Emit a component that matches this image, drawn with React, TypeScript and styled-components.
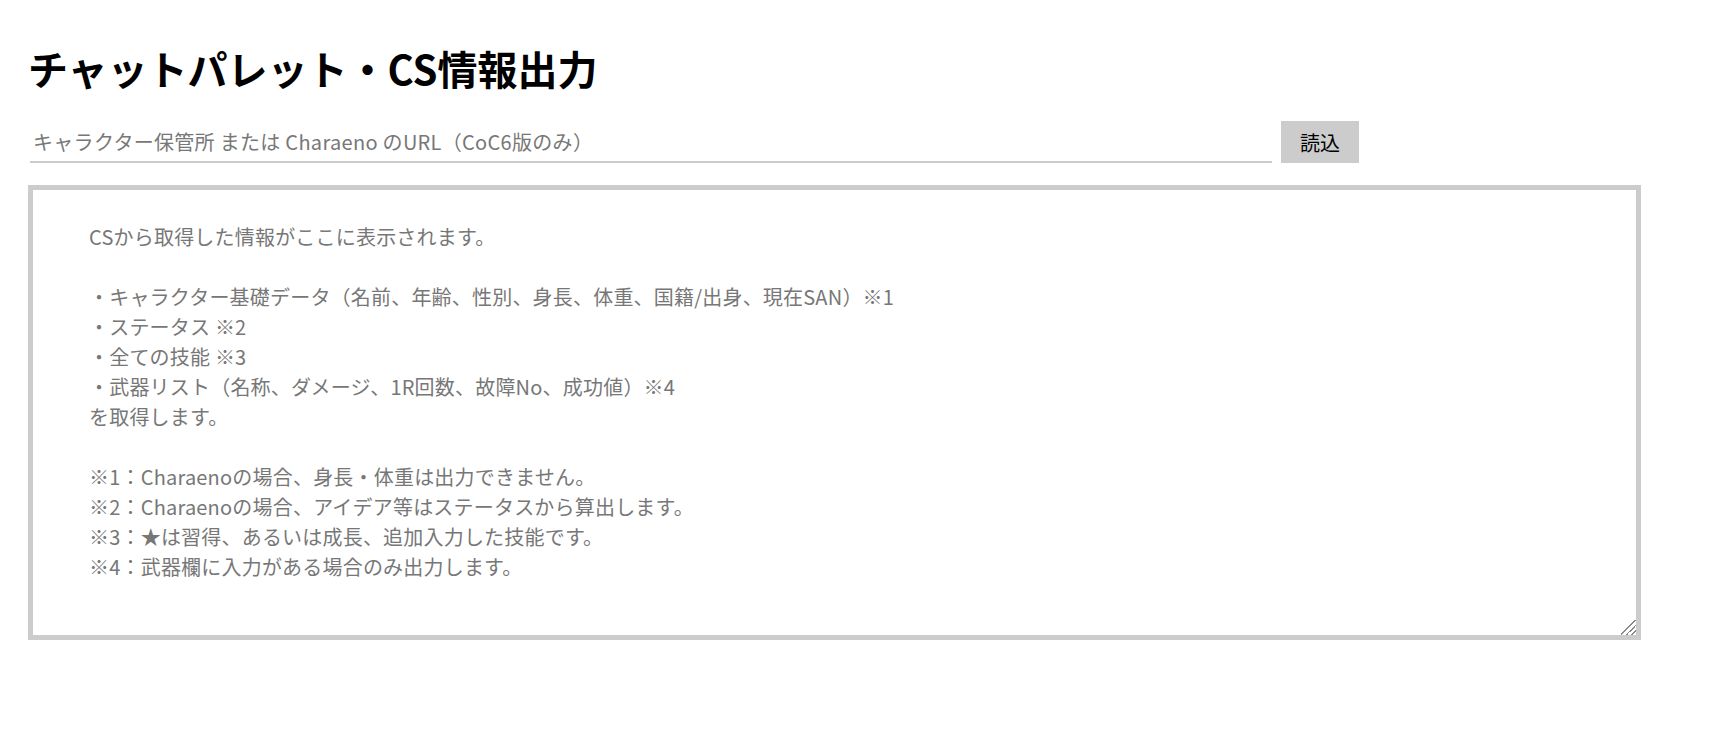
import React from 'react';
import styled, { createGlobalStyle } from 'styled-components';

const GlobalStyle = createGlobalStyle`
  body {
    margin: 0;
    background: #fff;
    font-family: "Noto Sans CJK JP", "Noto Sans", sans-serif;
    color: #000;
  }
`;

const PLACEHOLDER = [
  'CSから取得した情報がここに表示されます。',
  '',
  '・キャラクター基礎データ（名前、年齢、性別、身長、体重、国籍/出身、現在SAN）※1',
  '・ステータス ※2',
  '・全ての技能 ※3',
  '・武器リスト（名称、ダメージ、1R回数、故障No、成功値）※4',
  'を取得します。',
  '',
  '※1：Charaenoの場合、身長・体重は出力できません。',
  '※2：Charaenoの場合、アイデア等はステータスから算出します。',
  '※3：★は習得、あるいは成長、追加入力した技能です。',
  '※4：武器欄に入力がある場合のみ出力します。'
].join('\n');

// Styling
const Page = styled.main`
  padding: 0 28px;
`;

const Title = styled.h1`
  margin: 44px 0 0;
  font-size: 40px;
  line-height: 48px;
  font-weight: 700;
`;

const LoadRow = styled.div`
  display: flex;
  align-items: stretch;
  gap: 9px;
  margin-top: 29px;
  padding-left: 2px;
`;

const UrlInput = styled.input`
  box-sizing: border-box;
  width: 1242px;
  height: 42px;
  padding: 0 3px;
  border: none;
  border-bottom: 2px solid #ccc;
  font-family: inherit;
  font-size: 20px;
  letter-spacing: 0.3px;
  color: #333;
  outline: none;
  background: transparent;

  &::placeholder {
    color: #777;
  }
`;

const LoadButton = styled.button`
  width: 78px;
  height: 42px;
  padding: 0;
  border: none;
  background: #ccc;
  font-family: inherit;
  font-size: 20px;
  color: #000;
  cursor: pointer;
`;

const InfoArea = styled.textarea`
  display: block;
  box-sizing: border-box;
  width: 1613px;
  height: 455px;
  margin-top: 22px;
  padding: 32px 56px;
  border: 5px solid #ccc;
  font-family: inherit;
  font-size: 20px;
  line-height: 30px;
  letter-spacing: 0.2px;
  color: #333;
  outline: none;
  resize: both;

  &::placeholder {
    color: #777;
  }

  &::-webkit-resizer {
    background: linear-gradient(
      135deg,
      transparent 0 46%,
      #888 46% 52%,
      transparent 52% 64%,
      #888 64% 70%,
      transparent 70% 82%,
      #888 82% 88%,
      transparent 88%
    );
  }
`;

const App = (): JSX.Element => {
  return (
    <Page>
      <GlobalStyle />
      <Title>チャットパレット・CS情報出力</Title>
      <LoadRow>
        <UrlInput type="text" placeholder="キャラクター保管所 または Charaeno のURL（CoC6版のみ）" />
        <LoadButton type="button">読込</LoadButton>
      </LoadRow>
      <InfoArea placeholder={PLACEHOLDER} />
    </Page>
  );
};

export default App;
